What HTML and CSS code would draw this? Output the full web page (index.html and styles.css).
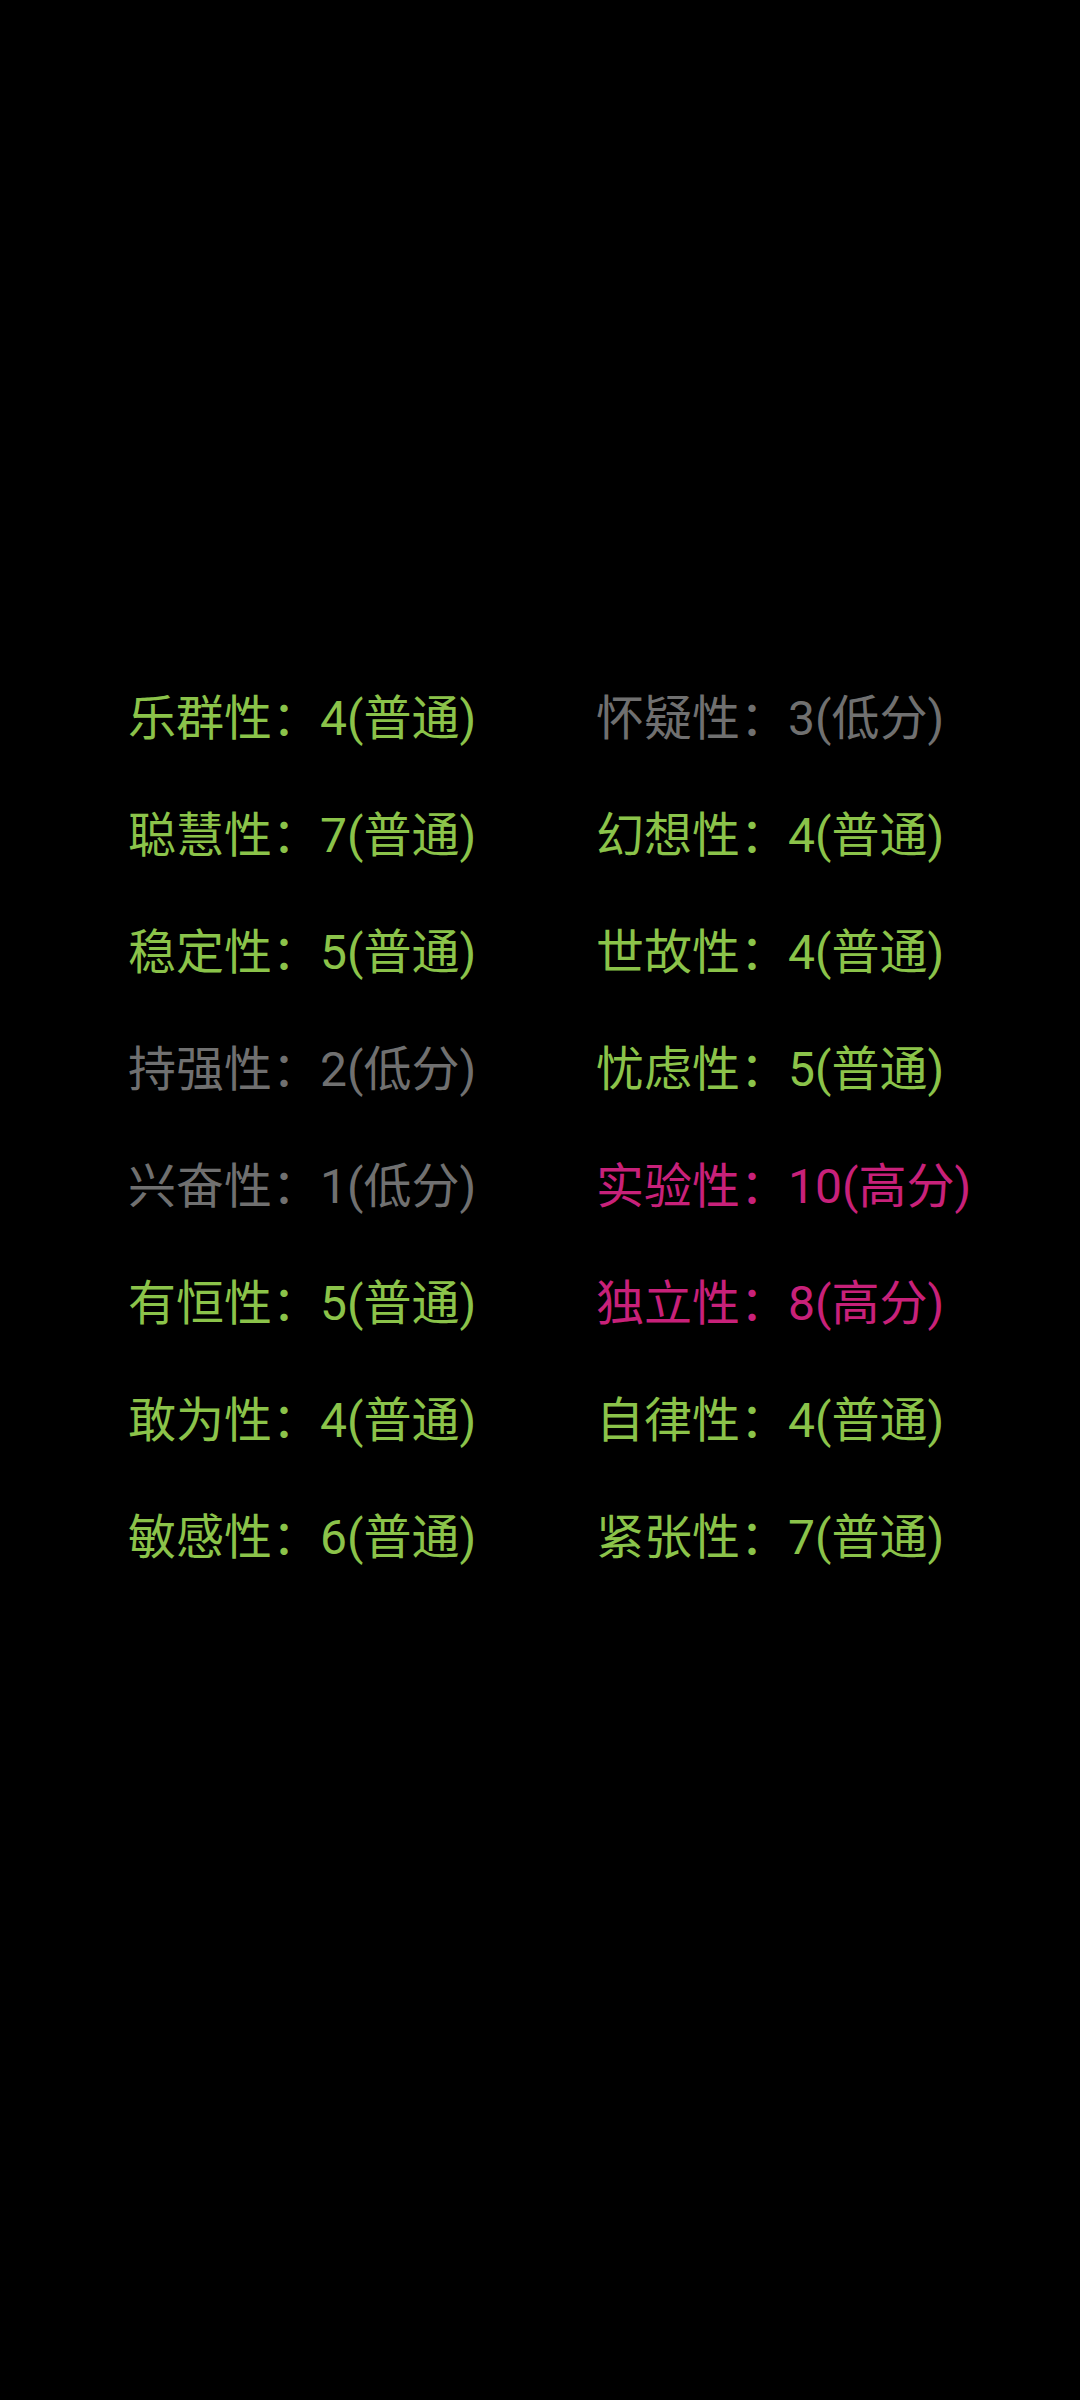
FILE: index.html
```html
<!DOCTYPE html>
<html lang="zh-CN">
<head>
<meta charset="utf-8">
<link rel="stylesheet" href="styles.css">
</head>
<body>
<div class="grid">
  <div class="item normal">乐群性：4(普通)</div>
  <div class="item low">怀疑性：3(低分)</div>
  <div class="item normal">聪慧性：7(普通)</div>
  <div class="item normal">幻想性：4(普通)</div>
  <div class="item normal">稳定性：5(普通)</div>
  <div class="item normal">世故性：4(普通)</div>
  <div class="item low">持强性：2(低分)</div>
  <div class="item normal">忧虑性：5(普通)</div>
  <div class="item low">兴奋性：1(低分)</div>
  <div class="item high">实验性：10(高分)</div>
  <div class="item normal">有恒性：5(普通)</div>
  <div class="item high">独立性：8(高分)</div>
  <div class="item normal">敢为性：4(普通)</div>
  <div class="item normal">自律性：4(普通)</div>
  <div class="item normal">敏感性：6(普通)</div>
  <div class="item normal">紧张性：7(普通)</div>
</div>
</body>
</html>
```
FILE: styles.css
```css
html, body {
  margin: 0;
  padding: 0;
  background: #000;
  width: 1080px;
  height: 2400px;
}
.grid {
  display: grid;
  grid-template-columns: 468px auto;
  padding-left: 128px;
  padding-top: 660px;
}
.item {
  font-family: Roboto, "Noto Sans CJK SC", sans-serif;
  font-size: 48px;
  height: 117px;
  line-height: 117px;
  white-space: nowrap;
}
.normal { color: #8bc34a; }
.low { color: #707070; }
.high { color: #c8217a; }
```
